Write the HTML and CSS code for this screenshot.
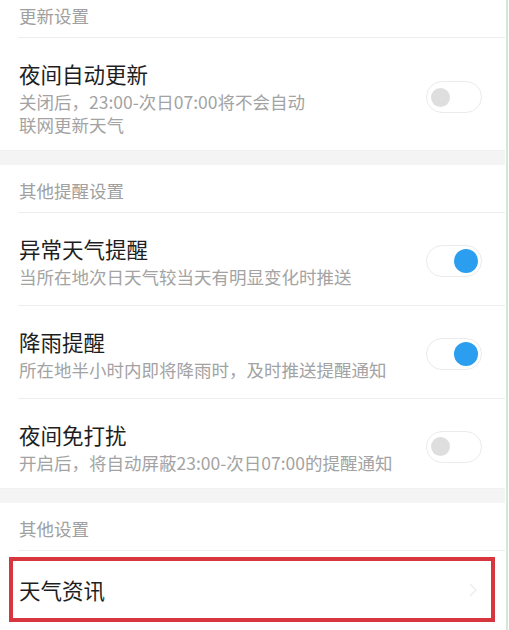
FILE: index.html
```html
<!DOCTYPE html>
<html lang="zh-CN">
<head>
<meta charset="utf-8">
<title>天气设置</title>
<link rel="stylesheet" href="styles.css">
</head>
<body>
<div class="screen">
  <section class="group">
    <div class="group-header">更新设置</div>
    <div class="row">
      <div class="row-text">
        <div class="row-title">夜间自动更新</div>
        <div class="row-sub">关闭后，23:00-次日07:00将不会自动<br>联网更新天气</div>
      </div>
      <span class="switch"><span class="knob"></span></span>
    </div>
  </section>
  <div class="band"></div>
  <section class="group">
    <div class="group-header">其他提醒设置</div>
    <div class="row">
      <div class="row-text">
        <div class="row-title">异常天气提醒</div>
        <div class="row-sub">当所在地次日天气较当天有明显变化时推送</div>
      </div>
      <span class="switch is-on"><span class="knob"></span></span>
    </div>
    <div class="row">
      <div class="row-text">
        <div class="row-title">降雨提醒</div>
        <div class="row-sub">所在地半小时内即将降雨时，及时推送提醒通知</div>
      </div>
      <span class="switch is-on"><span class="knob"></span></span>
    </div>
    <div class="row">
      <div class="row-text">
        <div class="row-title">夜间免打扰</div>
        <div class="row-sub">开启后，将自动屏蔽23:00-次日07:00的提醒通知</div>
      </div>
      <span class="switch"><span class="knob"></span></span>
    </div>
  </section>
  <div class="band"></div>
  <section class="group">
    <div class="group-header">其他设置</div>
    <div class="row row-link">
      <div class="row-title">天气资讯</div>
      <svg class="chevron" width="12" height="16" viewBox="0 0 12 16"><path d="M3 2l6 6-6 6" fill="none" stroke="#eeeeee" stroke-width="1.5"/></svg>
      <div class="mark"></div>
    </div>
  </section>
</div>
<div class="edge"></div>
</body>
</html>
```
FILE: styles.css
```css
html, body {
  margin: 0;
  padding: 0;
  background: #fff;
}

body {
  display: flex;
  height: 630px;
  overflow: hidden;
  font-family: "Noto Sans CJK SC", "Noto Sans", sans-serif;
}

.screen {
  width: 505px;
  margin-top: -10px;
  flex: none;
}

.edge {
  width: 2px;
  margin-left: 1px;
  background: #d3e8d4;
  flex: none;
}

.group-header {
  box-sizing: border-box;
  height: 48px;
  margin-left: 18px;
  padding: 4px 0 0 1px;
  display: flex;
  align-items: center;
  font-size: 17.5px;
  color: #a0a0a0;
  border-bottom: 1px solid #ededed;
}

.band {
  height: 14px;
  background: #f4f4f4;
  border-top: 1px solid #f0f0f0;
}

.row {
  margin-left: 18px;
  padding: 20px 23px 17px 1px;
  display: flex;
  align-items: center;
  justify-content: space-between;
  border-bottom: 1px solid #ededed;
}

.row:last-child {
  border-bottom: none;
  padding-bottom: 14px;
}

.row-title {
  font-size: 21.5px;
  line-height: 32px;
  color: #1e1e1e;
}

.row-sub {
  font-size: 17.5px;
  line-height: 23px;
  color: #a3a3a3;
}

.switch {
  box-sizing: border-box;
  width: 56px;
  height: 32px;
  border: 1.5px solid #ebebeb;
  border-radius: 16px;
  background: #fff;
  display: flex;
  align-items: center;
  padding: 0 4px;
  flex: none;
}

.knob {
  width: 19px;
  height: 19px;
  border-radius: 50%;
  background: #dedede;
}

.switch.is-on {
  justify-content: flex-end;
  padding: 0 3px;
}

.switch.is-on .knob {
  width: 24px;
  height: 24px;
  background: #2b9eef;
}

.row-link {
  position: relative;
  padding-top: 23px;
  padding-bottom: 23px;
}

.chevron {
  margin-right: 3px;
}

.mark {
  position: absolute;
  left: -9px;
  top: 6px;
  width: 486px;
  height: 65px;
  box-sizing: border-box;
  border: 4px solid #d8363f;
}
```
